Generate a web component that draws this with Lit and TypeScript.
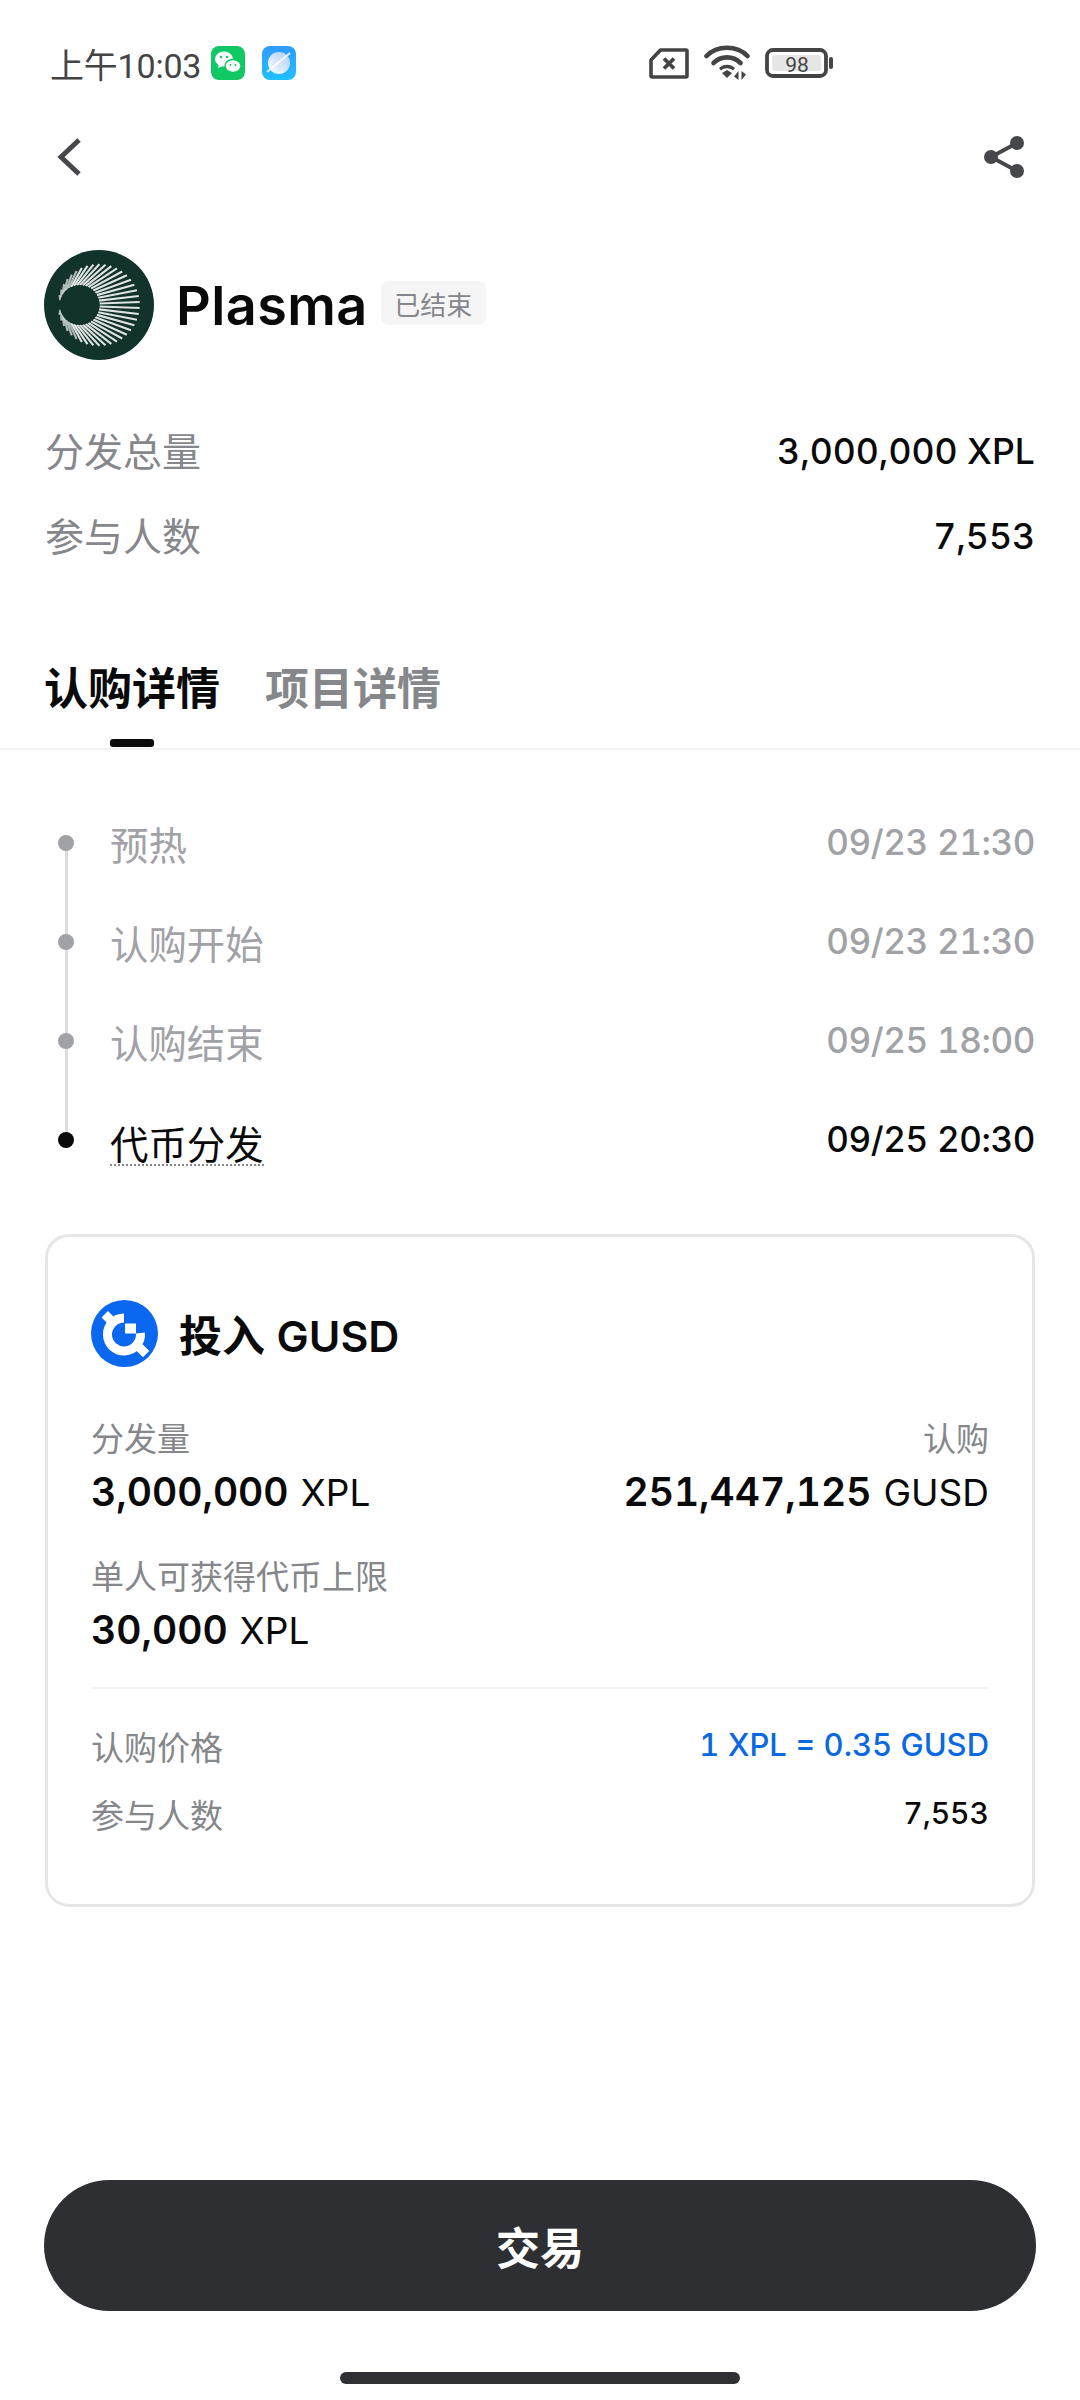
import { LitElement, html, css, svg } from "lit";
import { customElement } from "lit/decorators.js";

const rays = Array.from({ length: 40 }, (_, i) => {
  const deg = -166 + (i * 332) / 39;
  const a = (deg * Math.PI) / 180;
  const x1 = 35 + 19.5 * Math.cos(a), y1 = 54 + 19.5 * Math.sin(a);
  const x2 = 54 + 40 * Math.cos(a), y2 = 54 + 40 * Math.sin(a);
  const fade = Math.abs(deg) > 120 ? 0.7 : 0.92;
  return svg`<line x1=${x1} y1=${y1} x2=${x2} y2=${y2} stroke="#f1f3f2" stroke-width="2.1" opacity=${fade}/>`;
});

@customElement("app-root")
export class AppRoot extends LitElement {
  static styles = css`
    :host { display: block; width: 1080px; height: 2400px; background: #fff; color: #0a0a0a; overflow: hidden;
      font-family: Inter, "Noto Sans CJK SC", sans-serif; font-variant-numeric: tabular-nums; }
    .page { height: 2400px; display: flex; flex-direction: column; }
    .status { height: 64px; margin-top: 31px; padding: 0 0 0 50px; display: flex; align-items: center; color: #444; font-size: 34px; font-family: Roboto, "Noto Sans CJK SC", sans-serif; }
    .status .t { width: 161px; white-space: nowrap; letter-spacing: -.2px; }
    .status svg { display: block; }
    .status .app2 { margin-left: 17px; }
    .status .right { margin-left: 353px; display: flex; align-items: center; gap: 15px; }
    .nav { height: 123px; padding: 0 54px; display: flex; align-items: center; justify-content: space-between; }
    .head { height: 110px; margin-top: 32px; padding-left: 44px; display: flex; align-items: center; }
    .name { font-size: 54px; font-weight: 600; margin-left: 22px; line-height: 64px; letter-spacing: .4px; margin-top: 2px; }
    .badge { margin-left: 13px; height: 44px; width: 105px; display: flex; align-items: center; justify-content: center; background: #f5f5f6; border-radius: 8px; font-size: 26px; color: #85878b; margin-bottom: 4px; }
    .info { margin-top: 46px; padding: 0 45px; }
    .info .r { height: 85px; display: flex; align-items: center; justify-content: space-between; }
    .info .l { font-size: 39px; color: #85878b; }
    .info .v { font-size: 35.6px; font-weight: 500; margin-top: 5px; }
    .tabs { margin-top: 52px; height: 122px; border-bottom: 2px solid #f3f3f3; padding: 33px 0 0 44px; display: flex; gap: 45px; position: relative; font-size: 44px; font-weight: 700; line-height: 56px; box-sizing: border-box; }
    .tabs .off { color: #85878b; }
    .tabs .bar { position: absolute; left: 110px; bottom: 1px; width: 44px; height: 8px; border-radius: 3px; background: #0a0a0a; }
    .tl { margin-top: 43px; padding: 0 45px; display: flex; flex-direction: column; }
    .step { height: 99px; display: flex; align-items: center; position: relative; color: #a0a2a6; }
    .step .dot { width: 16px; height: 16px; border-radius: 50%; background: #a0a2a6; margin-left: 13px; flex: none; position: relative; z-index: 1; }
    .step .line { position: absolute; left: 20px; width: 3px; top: 50%; height: 99px; background: #dcdcde; }
    .step .l { margin-left: 36px; font-size: 38.400px; }
    .step .v { margin-left: auto; font-size: 35px; font-weight: 500; letter-spacing: -.4px; margin-bottom: 2px; }
    .step.on { color: #0a0a0a; }
    .step.on .dot { background: #0a0a0a; }
    .step.on .l { border-bottom: 2px dotted #85878b; line-height: 38px; margin-top: 12px; }
    .card { margin: 45px 45px 0; height: 673px; box-sizing: border-box; border: 3px solid #e5e6e7; border-radius: 24px; padding: 62px 43px 0; display: flex; flex-direction: column; }
    .title { display: flex; align-items: center; gap: 21px; font-size: 43px; font-weight: 600; height: 67px; }
    .title svg { margin-top: 2px; }
    .grid { margin-top: 48px; display: flex; justify-content: space-between; }
    .cell.end { text-align: right; }
    .cell .k { font-size: 33px; color: #85878b; line-height: 50px; }
    .cell .n { font-size: 37px; line-height: 56px; font-weight: 400; white-space: nowrap; }
    .cell .n b { font-size: 39px; font-weight: 600; margin-right: 2px; }
    .cell.second { margin-top: 31px; }
    .hr { margin-top: 28px; height: 2px; background: #f3f3f3; }
    .kvs { margin-top: 23px; }
    .kv { display: flex; justify-content: space-between; align-items: center; height: 68px; font-size: 33px; color: #85878b; }
    .kv .blue { color: #0a68e0; font-size: 31px; font-weight: 500; margin-bottom: 3px; }
    .kv .num { color: #0a0a0a; font-size: 30px; font-weight: 500; margin-bottom: 2px; }
    .spacer { flex: 1; }
    .btn { margin: 0 44px; height: 131px; border-radius: 66px; background: #2e2f33; color: #fff; display: flex; align-items: center; justify-content: center; font-size: 44px; font-weight: 700; flex: none; }
    .home { margin: 61px auto 16px; width: 400px; height: 12px; border-radius: 6px; background: #303134; flex: none; }
  `;

  render() {
    const steps = [
      ["预热", "09/23 21:30"],
      ["认购开始", "09/23 21:30"],
      ["认购结束", "09/25 18:00"],
      ["代币分发", "09/25 20:30"],
    ];
    return html`<div class="page">
      <div class="status">
        <span class="t">上午10:03</span>
        <svg width="34" height="34" viewBox="0 0 34 34"><rect width="34" height="34" rx="8" fill="#11c964"/><ellipse cx="13" cy="13" rx="9" ry="7.5" fill="#fff"/><path d="M8 18l-1 4 5-2z" fill="#fff"/><ellipse cx="22" cy="20" rx="8" ry="6.5" fill="#fff" stroke="#11c964" stroke-width="1.4"/><circle cx="10" cy="11" r="1.2" fill="#11c964"/><circle cx="16" cy="11" r="1.2" fill="#11c964"/><circle cx="19.5" cy="19" r="1" fill="#11c964"/><circle cx="24.5" cy="19" r="1" fill="#11c964"/></svg>
        <svg class="app2" width="34" height="34" viewBox="0 0 34 34"><defs><linearGradient id="b" x1="0" y1="0" x2="0" y2="1"><stop offset="0" stop-color="#2f9bff"/><stop offset="1" stop-color="#1fc0ff"/></linearGradient><linearGradient id="p" x1="0" y1="1" x2="1" y2="0"><stop offset="0" stop-color="#ffffff"/><stop offset="1" stop-color="#a9cdf5"/></linearGradient></defs><rect width="34" height="34" rx="8" fill="url(#b)"/><circle cx="17" cy="17" r="11" fill="url(#p)"/><path d="M5 26L28 7" stroke="#fff" stroke-width="2" opacity=".8"/></svg>
        <div class="right">
          <svg width="40" height="31" viewBox="0 0 40 31"><path d="M11.500 2H37a1 1 0 0 1 1 1V28a1 1 0 0 1-1 1H3a1 1 0 0 1-1-1V12z" fill="none" stroke="#444" stroke-width="3.600" stroke-linejoin="round"/><path d="M15 10.500l10 10M25 10.500l-10 10" stroke="#444" stroke-width="3.800"/></svg>
          <svg width="46" height="36" viewBox="0 0 46 36"><g fill="none" stroke="#444" stroke-linecap="round" stroke-width="4.600"><path d="M2.500 11C13 0 33 0 43.500 11"/><path d="M9.500 18C17 10.500 29 10.500 36.500 18"/></g><path d="M15 23C19 18.500 27 18.500 31 23l-2 2.500C26 22.500 20 22.500 17 25.500z" fill="#444"/><path d="M18 28l5-3 5 3-5 5z" fill="#444"/><path d="M34.500 26v9l-4.500-3.500zM37.500 35v-9l4.500 3.500z" fill="#444"/></svg>
          <svg width="68" height="30" viewBox="0 0 68 30"><rect x="2" y="2" width="59" height="26" rx="6" fill="none" stroke="#444" stroke-width="3.800"/><rect x="7" y="7" width="49" height="16" rx="3" fill="#e6e6e6"/><rect x="64" y="9" width="4" height="12" rx="2" fill="#444"/><text x="32" y="23.500" text-anchor="middle" font-size="21" fill="#444" font-family="Roboto, sans-serif">98</text></svg>
        </div>
      </div>
      <div class="nav">
        <svg width="30" height="40" viewBox="0 0 30 40"><path d="M25 3L7 20l18 17" fill="none" stroke="#45474b" stroke-width="5"/></svg>
        <svg width="44" height="44" viewBox="0 0 44 44"><path d="M35 8L9 22l26 14" fill="none" stroke="#45474b" stroke-width="4"/><circle cx="35" cy="8" r="7" fill="#45474b"/><circle cx="9" cy="22" r="7" fill="#45474b"/><circle cx="35" cy="36" r="7" fill="#45474b"/></svg>
      </div>
      <div class="head">
        <svg width="110" height="110" viewBox="0 0 108 108"><circle cx="54" cy="54" r="54" fill="#12332b"/>${rays}<circle cx="35" cy="54" r="19.500" fill="#12332b"/></svg>
        <span class="name">Plasma</span>
        <span class="badge">已结束</span>
      </div>
      <div class="info">
        <div class="r"><span class="l">分发总量</span><span class="v">3,000,000 XPL</span></div>
        <div class="r"><span class="l">参与人数</span><span class="v">7,553</span></div>
      </div>
      <div class="tabs"><span>认购详情</span><span class="off">项目详情</span><i class="bar"></i></div>
      <div class="tl">
        ${steps.map((s, i) => html`<div class="step ${i === 3 ? "on" : ""}">
          ${i < 3 ? html`<i class="line"></i>` : ""}
          <i class="dot"></i><span class="l">${s[0]}</span><span class="v">${s[1]}</span>
        </div>`)}
      </div>
      <div class="card">
        <div class="title">
          <svg width="67" height="67" viewBox="0 0 67 67"><circle cx="33.500" cy="33.500" r="33.500" fill="#0a68f0"/><path d="M33 18A16.500 16.500 0 1 0 49.400 33" fill="none" stroke="#fff" stroke-width="9"/><rect x="34" y="23.500" width="11" height="10" fill="#fff"/><rect x="12" y="14" width="13" height="9" transform="rotate(45 18 18.500)" fill="#fff"/><rect x="44" y="45" width="13" height="9" transform="rotate(45 50.500 49.500)" fill="#fff"/></svg>
          <span>投入 GUSD</span>
        </div>
        <div class="grid">
          <div class="cell">
            <div class="k">分发量</div>
            <div class="n"><b>3,000,000</b> XPL</div>
            <div class="cell second"><div class="k">单人可获得代币上限</div><div class="n"><b>30,000</b> XPL</div></div>
          </div>
          <div class="cell end">
            <div class="k">认购</div>
            <div class="n"><b>251,447,125</b> GUSD</div>
          </div>
        </div>
        <div class="hr"></div>
        <div class="kvs">
          <div class="kv"><span>认购价格</span><span class="blue">1 XPL = 0.35 GUSD</span></div>
          <div class="kv"><span>参与人数</span><span class="num">7,553</span></div>
        </div>
      </div>
      <div class="spacer"></div>
      <div class="btn">交易</div>
      <div class="home"></div>
    </div>`;
  }
}
